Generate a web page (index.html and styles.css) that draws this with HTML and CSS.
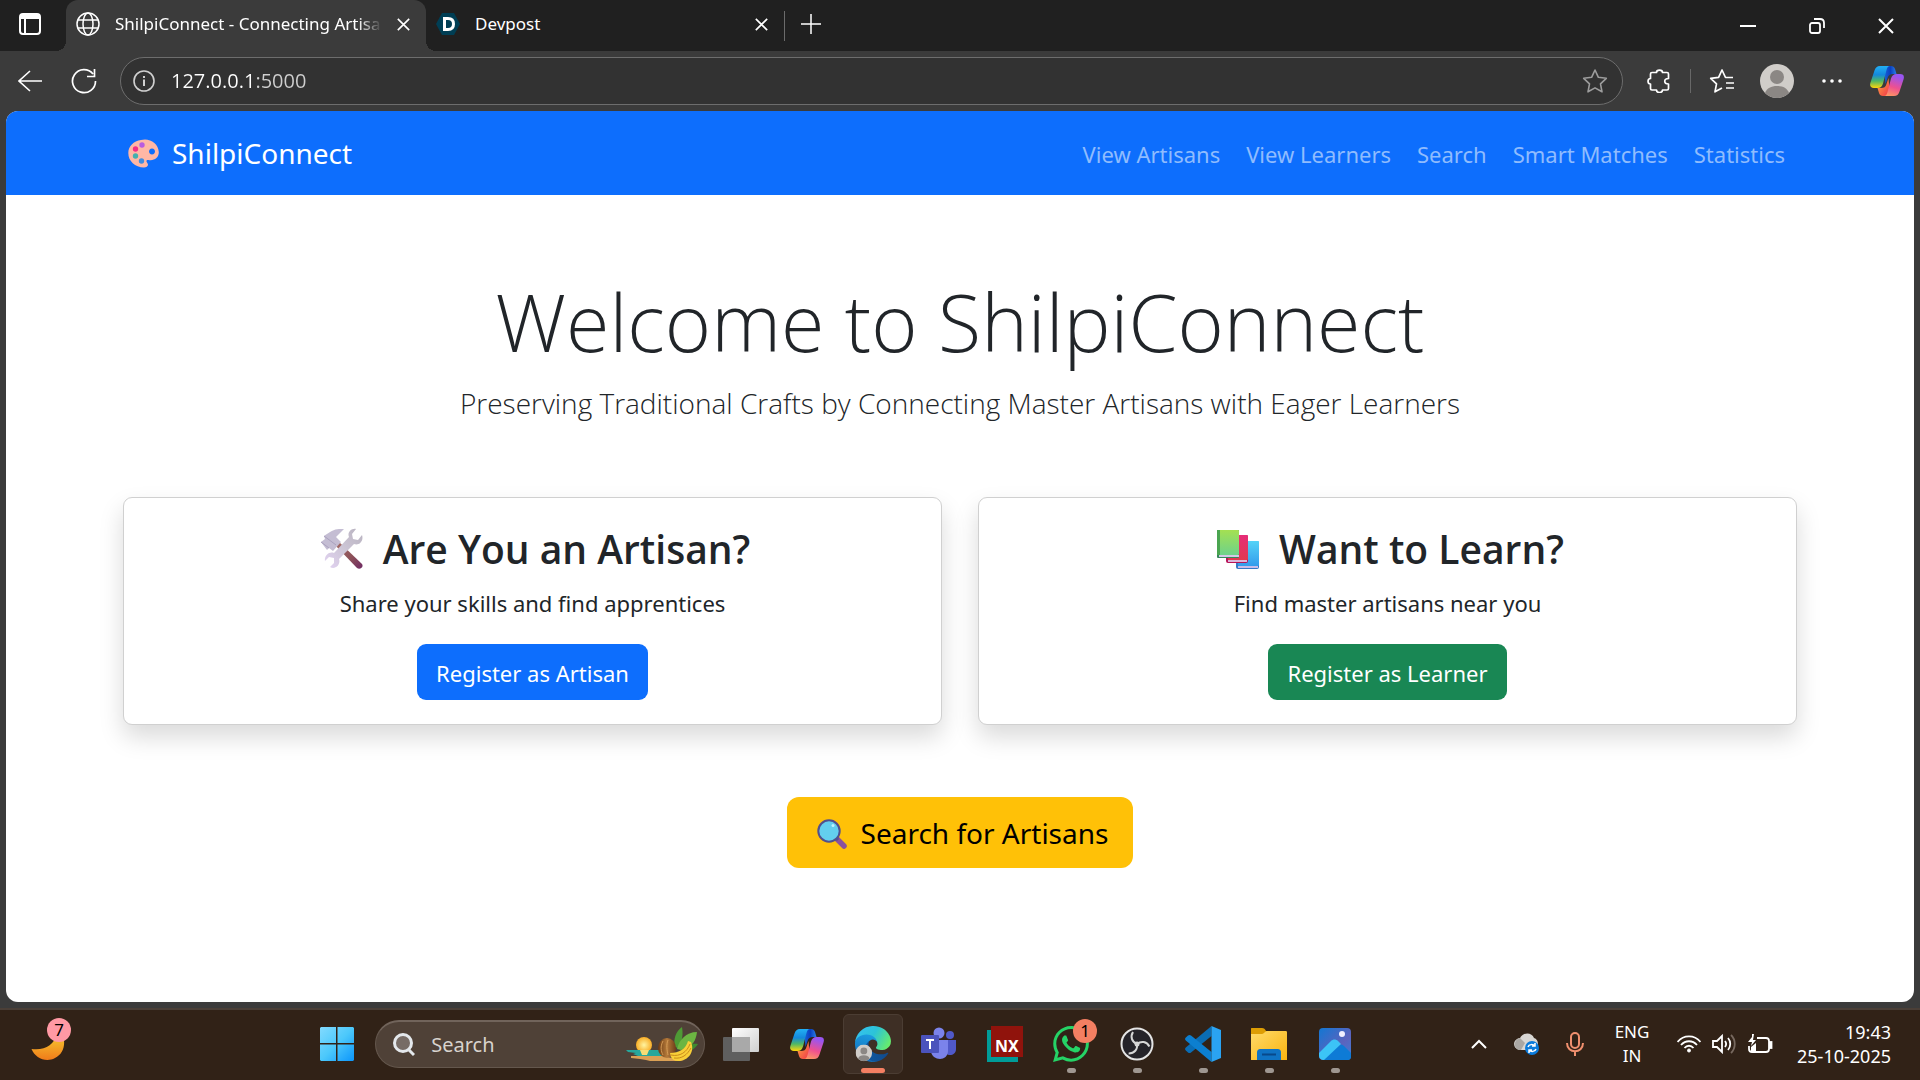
FILE: index.html
```html
<!DOCTYPE html>
<html lang="en">
<head>
<meta charset="UTF-8">
<meta name="viewport" content="width=device-width, initial-scale=1.0">
<title>ShilpiConnect - Connecting Artisans</title>
<link rel="stylesheet" href="styles.css">
</head>
<body>

<!-- shared shapes -->
<svg class="sprite" width="0" height="0" aria-hidden="true">
    <defs>
        <linearGradient id="cp-left" x1="0" y1="0" x2="0" y2="1">
            <stop offset="0" stop-color="#22b0f5"/><stop offset=".4" stop-color="#1488dc"/>
            <stop offset=".68" stop-color="#4fb765"/><stop offset="1" stop-color="#ffd60a"/>
        </linearGradient>
        <linearGradient id="cp-right" x1=".3" y1="0" x2="0" y2="1">
            <stop offset="0" stop-color="#9a55f0"/><stop offset=".5" stop-color="#ee5090"/>
            <stop offset="1" stop-color="#ffa35c"/>
        </linearGradient>
        <linearGradient id="cp-top" x1="0" y1="0" x2="1" y2="0">
            <stop offset="0" stop-color="#1b62d8"/><stop offset=".5" stop-color="#0a3fc0"/><stop offset="1" stop-color="#2a80e8"/>
        </linearGradient>
        <linearGradient id="cp-bottom" x1="0" y1="0" x2="1" y2="1">
            <stop offset="0" stop-color="#ffb040"/><stop offset="1" stop-color="#f0304a"/>
        </linearGradient>
        <symbol id="copilot" viewBox="0 0 34 30">
            <path fill="url(#cp-top)" d="M14 0h7c2 0 3.500 1 4 3l1.500 5H23c-3 0-4.500 1-5.500 4l-2 6z"/>
            <path fill="url(#cp-bottom)" d="M20 30h-7c-2 0-3.500-1-4-3l-1.500-5H11c3 0 4.500-1 5.500-4l2-6z"/>
            <path fill="url(#cp-left)" d="M20 0H10C7 0 5.500 1.500 4.500 4.500l-4 12C-.6 20 .5 22 4 22h3.500c3 0 4.500-1.500 5.500-4.500L16.500 4c.8-2.700 1.500-4 3.500-4z"/>
            <path fill="url(#cp-right)" d="M14 30h10c3 0 4.500-1.500 5.500-4.500l4-12C34.600 10 33.500 8 30 8h-3.500c-3 0-4.500 1.500-5.500 4.500L17.500 26c-.8 2.700-1.500 4-3.500 4z"/>
        </symbol>
        <symbol id="cross" viewBox="0 0 16 16">
            <path d="M1 1l14 14M15 1L1 15" fill="none" stroke="currentColor" stroke-width="2"/>
        </symbol>
        <symbol id="person" viewBox="0 0 34 34">
            <circle cx="17" cy="17" r="17" fill="#d0cdc9"/>
            <circle cx="17" cy="13" r="7" fill="#8b8784"/>
            <path d="M5 29c2-5 6-7 12-7s10 2 12 7a17 17 0 0 1-24 0z" fill="#8b8784"/>
        </symbol>
    </defs>
</svg>

<header class="browser">
    <div class="tab-strip">
        <button class="workspaces" aria-label="Tab actions">
            <svg width="22" height="22" viewBox="0 0 22 22" fill="none" stroke="#fff" stroke-width="2"><rect x="1" y="1" width="20" height="20" rx="3"/><path d="M1 3h20M1 5h20M6 6v15"/></svg>
        </button>
        <div class="tab active">
            <svg width="24" height="24" viewBox="0 0 24 24" fill="none" stroke="#fff" stroke-width="1.500"><circle cx="12" cy="12" r="11"/><ellipse cx="12" cy="12" rx="5" ry="11"/><path d="M2 8h20M2 16h20"/></svg>
            <span class="tab-title">ShilpiConnect - Connecting Artisans</span>
            <button class="tab-close" aria-label="Close tab"><svg width="13" height="13"><use href="#cross"/></svg></button>
        </div>
        <div class="tab">
            <svg width="24" height="24" viewBox="0 0 24 24"><path d="M6 1h12l6 11-6 11H6L0 12z" fill="#003e54"/><path d="M8.500 6.500h3.500c3.600 0 5.500 2 5.500 5.500s-1.900 5.500-5.500 5.500H8.500z" fill="none" stroke="#fff" stroke-width="3"/></svg>
            <span class="tab-title">Devpost</span>
            <button class="tab-close" aria-label="Close tab"><svg width="13" height="13"><use href="#cross"/></svg></button>
        </div>
        <button class="new-tab" aria-label="New tab">
            <svg width="20" height="20" viewBox="0 0 20 20"><path d="M10 0v20M0 10h20" stroke="#fff" stroke-width="1.500"/></svg>
        </button>
        <div class="window-controls">
            <button aria-label="Minimize"><svg width="16" height="16" viewBox="0 0 16 16"><path d="M0 8h16" stroke="#fff" stroke-width="2"/></svg></button>
            <button aria-label="Restore"><svg width="16" height="16" viewBox="0 0 16 16" fill="none" stroke="#fff" stroke-width="1.800"><rect x="1" y="5" width="10" height="10" rx="2"/><path d="M5 1h6c2.500 0 4 1.500 4 4v5"/></svg></button>
            <button aria-label="Close"><svg width="16" height="16"><use href="#cross"/></svg></button>
        </div>
    </div>

    <div class="toolbar">
        <button aria-label="Back"><svg width="24" height="22" viewBox="0 0 24 22" fill="none" stroke="#fff" stroke-width="1.600"><path d="M12 1L1 11l11 10M1 11h23"/></svg></button>
        <button aria-label="Refresh"><svg width="26" height="26" viewBox="0 0 26 26" fill="none" stroke="#fff" stroke-width="1.700"><path d="M24.500 13A11.500 11.500 0 1 1 22 6M23.500 1v7.500h-7.500"/></svg></button>
        <div class="address">
            <svg width="22" height="22" viewBox="0 0 22 22" fill="none" stroke="#d0d0d0" stroke-width="1.600"><circle cx="11" cy="11" r="10"/><path d="M11 9.500V16M11 6v2" stroke-width="2"/></svg>
            <input type="text" value="127.0.0.1:5000" aria-label="Address">
            <svg width="26" height="26" viewBox="0 0 26 26" fill="none" stroke="#9d9d9d" stroke-width="1.600" stroke-linejoin="round"><path d="M13 2l3.400 7.300 7.900 1-5.800 5.500 1.500 8L13 19.900l-7 3.900 1.500-8L1.700 10.300l7.900-1z"/></svg>
        </div>
        <div class="toolbar-actions">
            <button aria-label="Extensions"><svg width="24" height="24" viewBox="0 0 24 24" fill="none" stroke="#fff" stroke-width="1.700" stroke-linejoin="round"><path d="M5 3.500h4.500c0-3.300 6-3.300 6 0h4.500c1 0 1.500.5 1.500 1.500v4.500c-5 0-5 5.500 0 5.500v4.500c0 1-.5 1.500-1.500 1.500h-4.500c0 3.300-6 3.300-6 0H5c-1 0-1.500-.5-1.500-1.500V15c-3.300 0-3.300-5.500 0-5.500V5c0-1 .5-1.500 1.500-1.500z"/></svg></button>
            <span class="divider"></span>
            <button aria-label="Favorites"><svg width="26" height="26" viewBox="0 0 26 26" fill="none" stroke="#fff" stroke-width="1.700" stroke-linejoin="round"><path d="M24 9.500h-7.500L13 2 9.600 9.300l-7.900 1 5.800 5.500-1.500 8 7-3.900M17 15h8M17 20h8"/></svg></button>
            <button aria-label="Profile"><svg width="34" height="34"><use href="#person"/></svg></button>
            <button aria-label="Settings and more"><svg width="20" height="6" viewBox="0 0 20 6" fill="#fff"><circle cx="2" cy="3" r="1.800"/><circle cx="10" cy="3" r="1.800"/><circle cx="18" cy="3" r="1.800"/></svg></button>
            <button aria-label="Copilot"><svg width="34" height="30"><use href="#copilot"/></svg></button>
        </div>
    </div>
</header>

<div class="page">
    <nav class="navbar">
        <div class="container">
            <a class="brand" href="#">
                <svg width="31" height="29" viewBox="0 0 31 29"><path fill="#ffb7a5" fill-rule="evenodd" d="M13 1c8-2.500 17.500 3 17.800 12 .2 6-4.800 9-10.300 8-2-.4-2.600 1-1.500 2.500 2.500 3 0 5-3 5C7 28.500.3 22 .3 14 .3 7.500 5.500 2 13 1zM24 9.500c-4 0-4 6 0 6s4-6 0-6z"/><circle cx="14" cy="6" r="2.700" fill="#b95be0"/><circle cx="7.500" cy="10" r="2.700" fill="#f62f85"/><circle cx="7.500" cy="17" r="2.700" fill="#44b0ae"/><circle cx="13.500" cy="22" r="2.700" fill="#3f8de0"/></svg>
                ShilpiConnect
            </a>
            <div class="nav-links">
                <a href="#">View Artisans</a>
                <a href="#">View Learners</a>
                <a href="#">Search</a>
                <a href="#">Smart Matches</a>
                <a href="#">Statistics</a>
            </div>
        </div>
    </nav>

    <main class="container content">
        <div class="hero">
            <h1>Welcome to ShilpiConnect</h1>
            <p>Preserving Traditional Crafts by Connecting Master Artisans with Eager Learners</p>
        </div>

        <div class="cards">
            <section class="card">
                <h2>
                    <svg width="42" height="42" viewBox="0 0 42 42">
                        <defs>
                            <linearGradient id="handle" x1="0" y1="0" x2="1" y2="1"><stop offset="0" stop-color="#a8726a"/><stop offset=".6" stop-color="#8c5058"/><stop offset="1" stop-color="#6f2a63"/></linearGradient>
                            <linearGradient id="steel" x1="0" y1="1" x2="1" y2="0"><stop offset="0" stop-color="#e3d3f3"/><stop offset=".5" stop-color="#cdc6d6"/><stop offset="1" stop-color="#b8b2bf"/></linearGradient>
                        </defs>
                        <path d="M13 16l4-3 24 23c2 3-2 6-5 4z" fill="url(#handle)"/>
                        <path d="M0 14l4-3-1-3C9 4 13 1 18 1h5l-8 8 5 5-8 9-4-3-2 2z" fill="#c4bdd3"/>
                        <path d="M3 8l12 9M0 14l8 6" stroke="#aaa2be" fill="none"/>
                        <path d="M35 1c-5-1-9 4-7 8L13 25c-5-2-10 3-9 8l4-4 5 1v5l-4 4c5 3 11-2 9-8l15-15c5 2 10-3 8-9l-4 5-5-1-1-5z" fill="url(#steel)"/>
                    </svg>
                    Are You an Artisan?
                </h2>
                <p>Share your skills and find apprentices</p>
                <a class="btn btn-blue" href="#">Register as Artisan</a>
            </section>
            <section class="card">
                <h2>
                    <svg width="42" height="39" viewBox="0 0 42 39">
                        <defs>
                            <linearGradient id="green-book" x1="0" y1="0" x2="0" y2="1"><stop offset="0" stop-color="#a4e052"/><stop offset="1" stop-color="#6ed28a"/></linearGradient>
                            <linearGradient id="red-book" x1="0" y1="0" x2="0" y2="1"><stop offset="0" stop-color="#e62d78"/><stop offset="1" stop-color="#e1394f"/></linearGradient>
                            <linearGradient id="blue-book" x1="0" y1="0" x2="0" y2="1"><stop offset="0" stop-color="#54d3f7"/><stop offset="1" stop-color="#349cec"/></linearGradient>
                        </defs>
                        <rect x="19" y="11" width="23" height="28" rx="2" fill="#3579c8"/><rect x="21" y="11" width="21" height="25" rx="1" fill="url(#blue-book)"/><path d="M21 36h20v2H21z" fill="#c9bde9"/>
                        <rect x="9" y="5" width="22" height="28" rx="2" fill="#b91458"/><rect x="11" y="5" width="20" height="25" rx="1" fill="url(#red-book)"/><path d="M11 30h19v2H11z" fill="#dcb7dc"/>
                        <rect x="0" y="0" width="22" height="28" rx="1" fill="#36865b"/><rect x="0" y="0" width="22" height="25" rx="1" fill="url(#green-book)"/><path d="M0 0h3v25H0z" fill="#4aa550"/><path d="M2 25h20v2H2z" fill="#d3c9e6"/>
                    </svg>
                    Want to Learn?
                </h2>
                <p>Find master artisans near you</p>
                <a class="btn btn-green" href="#">Register as Learner</a>
            </section>
        </div>

        <div class="search-row">
            <a class="btn btn-yellow" href="#">
                <svg width="30" height="30" viewBox="0 0 30 30"><path d="M20 20l7 7" stroke="#8b519c" stroke-width="5.500" stroke-linecap="round"/><path d="M18 18l3 3" stroke="#5b4a8d" stroke-width="3"/><circle cx="12" cy="12" r="10.700" fill="#63cfee" stroke="#51508d" stroke-width="2"/><circle cx="16" cy="6.500" r="1.500" fill="#bff2ff"/></svg>
                Search for Artisans
            </a>
        </div>
    </main>
</div>

<footer class="taskbar">
    <button class="weather" aria-label="Weather">
        <svg width="34" height="34" viewBox="0 0 34 34"><defs><linearGradient id="moon" x1="0" y1="0" x2="0" y2="1"><stop offset="0" stop-color="#f6c92f"/><stop offset="1" stop-color="#f07b1a"/></linearGradient></defs><path fill="url(#moon)" d="M32 8c3 10 0 19-8 23C15 36 4 31 .500 22 14 24 23 17 26 8z"/></svg>
        <span class="badge pink">7</span>
    </button>

    <div class="apps">
        <button class="app" aria-label="Start">
            <svg width="36" height="36" viewBox="0 0 36 36"><defs><linearGradient id="win" gradientUnits="userSpaceOnUse" x1="0" y1="0" x2="36" y2="36"><stop offset="0" stop-color="#86dcff"/><stop offset=".5" stop-color="#4cc8fb"/><stop offset="1" stop-color="#0893fb"/></linearGradient></defs><path fill="url(#win)" d="M2 1h15v16H1V2zM18.500 1H34l1 1v15H18.500zM1 18.500h16V35H2l-1-1zM18.500 18.500H35V34l-1 1H18.500z"/></svg>
        </button>
        <div class="task-search">
            <svg width="22" height="24" viewBox="0 0 22 24" fill="none" stroke="#e4e8ec" stroke-width="3"><circle cx="10" cy="10" r="8.500" fill="#776c66"/><path d="M16 17l5 5"/></svg>
            <input type="text" placeholder="Search" aria-label="Search">
            <svg width="72" height="36" viewBox="0 0 72 36">
                <defs>
                    <radialGradient id="sun"><stop offset="0" stop-color="#fff4a0"/><stop offset="1" stop-color="#f9ae26"/></radialGradient>
                    <linearGradient id="nut" x1="0" y1="0" x2="1" y2="0"><stop offset="0" stop-color="#6a3a14"/><stop offset=".5" stop-color="#b57a3a"/><stop offset="1" stop-color="#6d3d18"/></linearGradient>
                </defs>
                <circle cx="18" cy="18" r="8" fill="url(#sun)"/>
                <path d="M0 23h36v6H12l-5-2 3-1-8-1z" fill="#27a79c"/><path d="M14 23h9l-2 5h-5z" fill="#f6dd76"/>
                <path d="M5 29h33l20 5H24l-4-1-6-1-9-1z" fill="#dba055"/>
                <path d="M49 20C47 12 50 4 56 0c1 6 1 14-4 21z" fill="#4e9a35"/><path d="M51 22c2-9 9-17 20-17-1 8-4 15-16 18z" fill="#6cb542"/><path d="M55 24c5-6 11-8 17-7-3 5-8 8-15 8z" fill="#3f8b30"/>
                <ellipse cx="41" cy="21" rx="9" ry="10" fill="url(#nut)"/><path d="M37 14c-3 6-2 10 0 14M42 13c-2 5-1 10 0 15" stroke="#d39a55" fill="none"/>
                <path d="M44 26c9 0 16-4 18-12l3 1c4 9-2 19-13 19-4 0-6-2-7-4z" fill="#f9cf38"/><path d="M45 28c9 2 16-3 19-11M48 31c8 1 13-3 17-10" stroke="#c98a1a" fill="none"/>
            </svg>
        </div>
        <button class="app" aria-label="Task view">
            <svg width="36" height="34" viewBox="0 0 36 34"><defs><linearGradient id="pane" x1="0" y1="0" x2="1" y2="1"><stop offset="0" stop-color="#fff"/><stop offset="1" stop-color="#cfcfcf"/></linearGradient></defs><rect x="0" y="10" width="27" height="24" rx="1" fill="#5f5f5f"/><rect x="9" y="1" width="27" height="24" rx="1" fill="url(#pane)"/><path d="M9 10h18v15H9z" fill="#a9a9a9"/></svg>
        </button>
        <button class="app" aria-label="Copilot"><svg width="34" height="30"><use href="#copilot"/></svg></button>
        <button class="app current" aria-label="Edge">
            <svg width="36" height="36" viewBox="0 0 256 256">
                <defs>
                    <linearGradient id="edge-a" x1="0" y1="0" x2="1" y2="0"><stop offset="0" stop-color="#0c59a4"/><stop offset="1" stop-color="#114a8b"/></linearGradient>
                    <linearGradient id="edge-b" x1=".5" y1="0" x2=".3" y2="1"><stop offset="0" stop-color="#1b9de2"/><stop offset="1" stop-color="#1268b4"/></linearGradient>
                    <linearGradient id="edge-c" x1="0" y1=".2" x2="1" y2=".6"><stop offset="0" stop-color="#35c1f1"/><stop offset=".5" stop-color="#2cc3d8"/><stop offset="1" stop-color="#66eb6e"/></linearGradient>
                </defs>
                <g transform="translate(-5 -5)">
                    <path fill="url(#edge-a)" d="M235.680 195.460a93.730 93.730 0 01-10.540 4.710 101.870 101.870 0 01-35.900 6.460c-47.320 0-88.540-32.550-88.540-74.320A31.480 31.480 0 01117.130 105c-42.800 1.800-53.800 46.400-53.800 72.530 0 73.880 68.090 81.370 82.760 81.370 7.910 0 19.840-2.300 27-4.560l1.310-.44a128.340 128.340 0 0066.600-52.800 4 4 0 00-5.320-5.640z"/>
                    <path fill="url(#edge-b)" d="M110.340 246.340A79.200 79.200 0 0187.600 225a80.720 80.720 0 0129.530-120c3.120-1.470 8.450-4.130 15.540-4a32.350 32.350 0 0125.690 13 31.880 31.880 0 016.360 18.660c0-.21 24.460-79.600-80-79.600-43.900 0-80 41.660-80 78.210a130.150 130.150 0 0012.110 56 128 128 0 00156.380 67.110 75.550 75.550 0 01-62.780-8z"/>
                    <path fill="url(#edge-c)" d="M156.940 153.780c-.81 1.050-3.300 2.500-3.300 5.660 0 2.610 1.700 5.120 4.720 7.230 14.380 10 41.490 8.680 41.560 8.680a59.560 59.560 0 0030.270-8.350 61.380 61.380 0 0030.430-52.880c.26-22.410-8-37.310-11.340-43.910-21.190-41.450-66.930-65.290-116.670-65.290a128 128 0 00-128 126.200c.48-36.540 36.800-66.050 80-66.050 3.500 0 23.460.34 42 10.070 16.340 8.580 24.900 18.940 30.850 29.210 6.180 10.670 7.280 24.150 7.280 29.520s-2.740 13.330-7.800 19.910z"/>
                </g>
                <use href="#person" x="4" y="132" width="118" height="118"/>
            </svg>
        </button>
        <button class="app" aria-label="Teams">
            <svg width="36" height="34" viewBox="0 0 36 34"><circle cx="29" cy="8" r="4" fill="#5059c9"/><path d="M26 13h9v9c0 4-3 6-6 6s-5-2-5-6z" fill="#5059c9"/><circle cx="18" cy="6" r="5.500" fill="#7b83eb"/><path d="M11 13h16v11c0 5-4 8-8 8s-9-3-9-8z" fill="#7b83eb"/><rect x="0" y="8" width="18" height="18" rx="1" fill="#4b53bc"/><path d="M5 13h8M9 13v9" stroke="#fff" stroke-width="2"/></svg>
        </button>
        <button class="app" aria-label="NX">
            <svg width="36" height="36" viewBox="0 0 36 36"><path d="M0 4h31v32H0z" fill="#009c98"/><path d="M4 0h32v31H4z" fill="#90130c"/><text x="8" y="26" class="nx">NX</text></svg>
        </button>
        <button class="app running" aria-label="WhatsApp">
            <svg width="36" height="36" viewBox="0 0 24 24" fill="#25d366"><path d="M17.472 14.382c-.297-.149-1.758-.867-2.030-.967-.273-.099-.471-.148-.67.15-.197.297-.767.966-.94 1.164-.173.199-.347.223-.644.075-.297-.15-1.255-.463-2.390-1.475-.883-.788-1.480-1.761-1.653-2.059-.173-.297-.018-.458.13-.606.134-.133.298-.347.446-.52.149-.174.198-.298.298-.497.099-.198.05-.371-.025-.52-.075-.149-.669-1.612-.916-2.207-.242-.579-.487-.5-.669-.51-.173-.008-.371-.01-.57-.01-.198 0-.52.074-.792.372-.272.297-1.040 1.016-1.040 2.479 0 1.462 1.065 2.875 1.213 3.074.149.198 2.096 3.200 5.077 4.487.709.306 1.262.489 1.694.625.712.227 1.360.195 1.871.118.571-.085 1.758-.719 2.006-1.413.248-.694.248-1.289.173-1.413-.074-.124-.272-.198-.57-.347m-5.421 7.403h-.004a9.870 9.870 0 01-5.031-1.378l-.361-.214-3.741.982.998-3.648-.235-.374a9.860 9.860 0 01-1.510-5.260c.001-5.450 4.436-9.884 9.888-9.884 2.640 0 5.122 1.030 6.988 2.898a9.825 9.825 0 012.893 6.994c-.003 5.450-4.437 9.884-9.885 9.884m8.413-18.297A11.815 11.815 0 0012.050 0C5.495 0 .16 5.335.157 11.892c0 2.096.547 4.142 1.588 5.945L.057 24l6.305-1.654a11.882 11.882 0 005.683 1.448h.005c6.554 0 11.890-5.335 11.893-11.893a11.821 11.821 0 00-3.480-8.413z"/></svg>
            <span class="badge coral">1</span>
        </button>
        <button class="app running" aria-label="OBS">
            <svg width="34" height="34" viewBox="0 0 34 34"><circle cx="17" cy="17" r="15.500" fill="#252329" stroke="#e4e4e4" stroke-width="2"/><g fill="none" stroke="#d6d6d6" stroke-width="2"><path id="blade" d="M17 17c-5-2-7-7-4-12"/><use href="#blade" transform="rotate(120 17 17)"/><use href="#blade" transform="rotate(240 17 17)"/></g><circle cx="17" cy="17" r="2.500" fill="#d6d6d6"/></svg>
        </button>
        <button class="app running" aria-label="Visual Studio Code">
            <svg width="36" height="36" viewBox="0 0 36 36"><path d="M26.500 0v10L6 26.500c-1 .8-2 .8-3 0L.800 24.500c-1-1-1-2 0-3z" fill="#0a6db5"/><path d="M26.500 36V26L6 9.500c-1-.8-2-.8-3 0L.800 11.500c-1 1-1 2 0 3z" fill="#0c7fd0"/><path d="M26.500 0L36 4v28l-9.500 4z" fill="#2aa3f2"/></svg>
        </button>
        <button class="app running" aria-label="File Explorer">
            <svg width="36" height="34" viewBox="0 0 36 34"><defs><linearGradient id="folder" x1="0" y1="0" x2="1" y2="1"><stop offset="0" stop-color="#ffdb6a"/><stop offset="1" stop-color="#f9b30f"/></linearGradient></defs><path d="M0 2c0-1 0-1 1-1h10c2 0 3 1 4 3H35v6H0z" fill="#dd9d04"/><path d="M0 7h11c2 0 3-3 5-3h19c1 0 1 1 1 2v27H0z" fill="url(#folder)"/><path d="M6 33v-7c0-3 1-4 4-4h16c3 0 4 1 4 4v7z" fill="#0f73c4"/><path d="M11 27.500h14" stroke="#08498a" stroke-width="2"/></svg>
        </button>
        <button class="app running" aria-label="Photos">
            <svg width="32" height="32" viewBox="0 0 32 32"><defs><linearGradient id="sky" x1="0" y1="0" x2="1" y2="1"><stop offset="0" stop-color="#1277d3"/><stop offset=".6" stop-color="#5c63bd"/><stop offset="1" stop-color="#3a7fd8"/></linearGradient></defs><rect width="32" height="32" rx="4" fill="url(#sky)"/><path d="M4 32l15-14c2-2 4-2 6 0l7 7v3c0 3-1 4-4 4z" fill="#0e7bd6"/><path d="M0 25l12-12c2-2 5-2 7 0l3 3L5 32c-3 0-5-2-5-4z" fill="#3cc4f7"/><circle cx="23" cy="6" r="3" fill="#f1efff"/></svg>
        </button>
    </div>

    <div class="tray">
        <button aria-label="Show hidden icons"><svg width="16" height="10" viewBox="0 0 16 10"><path d="M1 9l7-7 7 7" fill="none" stroke="#fff" stroke-width="2"/></svg></button>
        <button aria-label="OneDrive"><svg width="26" height="22" viewBox="0 0 26 22"><path d="M7 17c-9 0-9-11-1-12C9-1 18-1 20 5c4 1 5 6 3 12z" fill="#d9d7d4"/><path d="M7 17C0 18-2 7 6 5l5 5z" fill="#aaa7a3"/><circle cx="18" cy="15" r="7" fill="#0a7bdc"/><path d="M14 14c1-3 5-3 7-1M21 10v3h-3M22 16c-1 3-5 3-7 1M15 20v-3h3" fill="none" stroke="#fff" stroke-width="1.500"/></svg></button>
        <button aria-label="Microphone"><svg width="18" height="24" viewBox="0 0 18 24" fill="none" stroke="#f0906f" stroke-width="2"><rect x="5" y="1" width="8" height="15" rx="4"/><path d="M1 11c0 11 16 11 16 0M9 19v5"/></svg></button>
        <button class="lang">ENG<br>IN</button>
        <button class="status" aria-label="Network, volume, battery">
            <svg width="24" height="18" viewBox="0 0 24 18" fill="none" stroke="#fff" stroke-width="1.800"><path d="M.500 7c6-7.500 17-7.500 23 0M4 10c4.500-5 11.500-5 16 0M7.500 13c2.500-3 6.500-3 9 0"/><circle cx="12" cy="15.500" r="1.500" fill="#fff" stroke-width="1"/></svg>
            <svg width="24" height="20" viewBox="0 0 24 20" fill="none" stroke="#fff" stroke-width="1.800"><path d="M1 7v6h4l5 5V2L5 7zM13 7c1.500 2 1.500 4 0 6M16 4c3 3.500 3 8.500 0 12"/><path d="M19 1c5 5 5 13 0 18" stroke="#77695f"/></svg>
            <svg width="26" height="20" viewBox="0 0 26 20" fill="none" stroke="#fff" stroke-width="1.800"><path d="M10 4h9c2 0 3 1 3 3v8c0 2-1 3-3 3H5c-2 0-3-1-3-3v-3"/><path d="M23 8v6h1.500V8z" fill="#fff"/><path d="M5 0v3l-4 5h4l-1 4 5-6H6l1-6z" fill="#fff" stroke="none"/><path d="M4 17v-4l5-4v8z" fill="#fff" stroke="none"/></svg>
        </button>
        <button class="clock">19:43<br>25-10-2025</button>
    </div>
</footer>

</body>
</html>
```
FILE: styles.css
```css
* {
    box-sizing: border-box;
}
body {
    margin: 0;
    min-height: 100vh;
    display: flex;
    flex-direction: column;
    background-color: #3b3b3b;
    color: #212529;
    font-family: "Noto Sans", "Open Sans", sans-serif;
    font-size: 22px;
    line-height: 38px;
}
button {
    display: flex;
    align-items: center;
    justify-content: center;
    padding: 0;
    border: none;
    background: none;
    color: #fff;
    font: inherit;
}
svg {
    display: block;
    flex-shrink: 0;
}
input {
    flex: 1;
    min-width: 0;
    padding: 0;
    border: none;
    outline: none;
    background: none;
    font: inherit;
}
a {
    text-decoration: none;
}
.sprite {
    position: absolute;
}

/* browser */
.tab-strip {
    display: flex;
    height: 51px;
    background-color: #202020;
    color: #fff;
    font-size: 17px;
    line-height: 24px;
}
.workspaces {
    width: 60px;
    margin-right: 6px;
    padding-bottom: 3px;
}
.tab {
    position: relative;
    display: flex;
    align-items: center;
    width: 358px;
    padding: 0 10px 3px;
}
.tab.active {
    width: 360px;
    background-color: #3b3b3b;
    border-radius: 12px 12px 0 0;
}
.tab.active::before,
.tab.active::after {
    content: "";
    position: absolute;
    bottom: 0;
    width: 10px;
    height: 10px;
}
.tab.active::before {
    left: -10px;
    background: radial-gradient(circle at 0 0, #202020 10px, #3b3b3b 10px);
}
.tab.active::after {
    right: -10px;
    background: radial-gradient(circle at 100% 0, #202020 10px, #3b3b3b 10px);
}
.tab-title {
    flex: 1;
    margin-left: 15px;
    overflow: hidden;
    white-space: nowrap;
}
.tab.active .tab-title {
    -webkit-mask-image: linear-gradient(to left, transparent, #000 24px);
    mask-image: linear-gradient(to left, transparent, #000 24px);
}
.tab-close {
    width: 26px;
    height: 26px;
    margin-left: 8px;
}
.new-tab {
    width: 54px;
    padding-bottom: 4px;
    position: relative;
}
.new-tab::before {
    content: "";
    position: absolute;
    left: 0;
    top: 11px;
    width: 1px;
    height: 30px;
    background-color: #6b6b6b;
}
.window-controls {
    display: flex;
    margin-left: auto;
}
.window-controls button {
    width: 69px;
}
.toolbar {
    display: flex;
    align-items: center;
    height: 60px;
    padding: 0 9px 0 6px;
    gap: 6px;
}
.toolbar button {
    width: 48px;
    height: 48px;
}
.address {
    flex: 1;
    display: flex;
    align-items: center;
    height: 48px;
    margin: 0 6px;
    padding: 0 14px 0 12px;
    gap: 16px;
    border: 1px solid #6d6d6d;
    border-radius: 24px;
    background-color: #323232;
}
/* port is dimmer than the host */
.address input {
    font-family: "Open Sans", sans-serif;
    font-size: 20px;
    line-height: 30px;
    color: transparent;
    background: linear-gradient(to right, #fff 84px, #cfcfcf 84px);
    -webkit-background-clip: text;
    background-clip: text;
}
.toolbar-actions {
    display: flex;
    align-items: center;
    gap: 7px;
}
.divider {
    width: 1px;
    height: 24px;
    background-color: #686868;
}

/* page */
.page {
    flex: 1;
    margin: 0 6px 6px;
    border-radius: 12px;
    background-color: #fff;
    overflow: hidden;
}
.container {
    max-width: 1710px;
    margin: 0 auto;
    padding: 0 18px;
}
.navbar {
    background-color: #0d6efd;
}
.navbar .container {
    display: flex;
    align-items: center;
    justify-content: space-between;
    height: 84px;
}
.brand {
    display: flex;
    align-items: center;
    gap: 13px;
    padding: 1px 0 0 5px;
    color: #fff;
    font-size: 28px;
    line-height: 45px;
}
.nav-links {
    display: flex;
    gap: 2px;
}
.nav-links a {
    padding: 13px 12px 11px;
    color: #8fbcfe;
}
.content {
    padding-top: 72px;
    padding-bottom: 72px;
    text-align: center;
}
.hero,
.card h2 {
    font-family: "Open Sans", sans-serif;
}
.hero h1 {
    margin: 0 0 4px;
    font-size: 79px;
    font-weight: 300;
    line-height: 110px;
}
.hero p {
    margin: 0;
    font-size: 28px;
    font-weight: 300;
    line-height: 44px;
}
.cards {
    display: grid;
    grid-template-columns: 1fr 1fr;
    gap: 36px;
    margin: 72px 0;
}
.card {
    padding: 24px;
    border: 1px solid #d0d0d0;
    border-radius: 9px;
    background-color: #fff;
    box-shadow: 0 12px 24px rgba(0, 0, 0, 0.15);
}
.card h2 {
    display: flex;
    align-items: center;
    justify-content: center;
    gap: 20px;
    margin: 0 0 8px;
    padding-left: 6px;
    font-size: 39px;
    font-weight: 600;
    line-height: 54px;
}
.card p {
    margin: 0 0 22px;
}
.btn {
    display: inline-flex;
    align-items: center;
    vertical-align: top;
    border-radius: 9px;
    padding: 10px 19px 8px;
    color: #fff;
}
.btn-blue {
    background-color: #0d6efd;
}
.btn-green {
    background-color: #198754;
}
.btn-yellow {
    gap: 14px;
    padding: 14px 25px 12px 30px;
    border-radius: 12px;
    background-color: #ffc107;
    color: #000;
    font-size: 28px;
    line-height: 45px;
}

/* taskbar */
.taskbar {
    display: grid;
    grid-template-columns: 16% auto 1fr;
    align-items: center;
    height: 72px;
    padding-bottom: 2px;
    border-top: 2px solid #4b3f37;
    background-color: #312217;
    color: #fff;
    font-size: 17px;
    line-height: 24px;
}
.weather {
    position: relative;
    width: 60px;
    height: 60px;
    margin-left: 18px;
}
.badge {
    position: absolute;
    width: 24px;
    height: 24px;
    border-radius: 50%;
    color: #000;
    text-align: center;
}
.pink {
    background-color: #ff99a4;
    top: 4px;
    right: 7px;
}
.coral {
    background-color: #f47f62;
    top: 5px;
    right: 4px;
}
.apps {
    display: flex;
    align-items: center;
    gap: 6px;
}
.app {
    position: relative;
    width: 60px;
    height: 60px;
    border-radius: 6px;
}
.app.current {
    background-color: #3e2f25;
    border: 1px solid #4b3d33;
}
.app.current::after,
.app.running::after {
    content: "";
    position: absolute;
    bottom: 1px;
    left: 50%;
    width: 9px;
    height: 5px;
    margin-left: -4px;
    border-radius: 3px;
    background-color: #9f9791;
}
.app.current::after {
    bottom: 0;
    width: 24px;
    margin-left: -12px;
    background-color: #f47f62;
}
.nx {
    fill: #fff;
    font-size: 16px;
    font-weight: 700;
}
.task-search {
    display: flex;
    align-items: center;
    width: 330px;
    height: 48px;
    margin-left: 2px;
    padding: 0 6px 0 17px;
    gap: 16px;
    border: 1px solid #64574d;
    border-top: 2px solid #71645b;
    border-radius: 24px;
    background-color: #4f4137;
}
.task-search input {
    color: #e0dcd8;
    font-size: 20px;
    line-height: 30px;
}
.task-search input::placeholder {
    color: #d8d3ce;
    opacity: 1;
}
.tray {
    display: flex;
    align-items: center;
    justify-content: flex-end;
    padding-right: 29px;
}
.tray button {
    width: 48px;
    height: 60px;
}
.tray .lang {
    width: 66px;
    margin-right: 6px;
}
.tray .status {
    width: 108px;
    justify-content: space-around;
}
.tray .clock {
    width: 112px;
    justify-content: flex-end;
    font-size: 18px;
    text-align: right;
}
```
